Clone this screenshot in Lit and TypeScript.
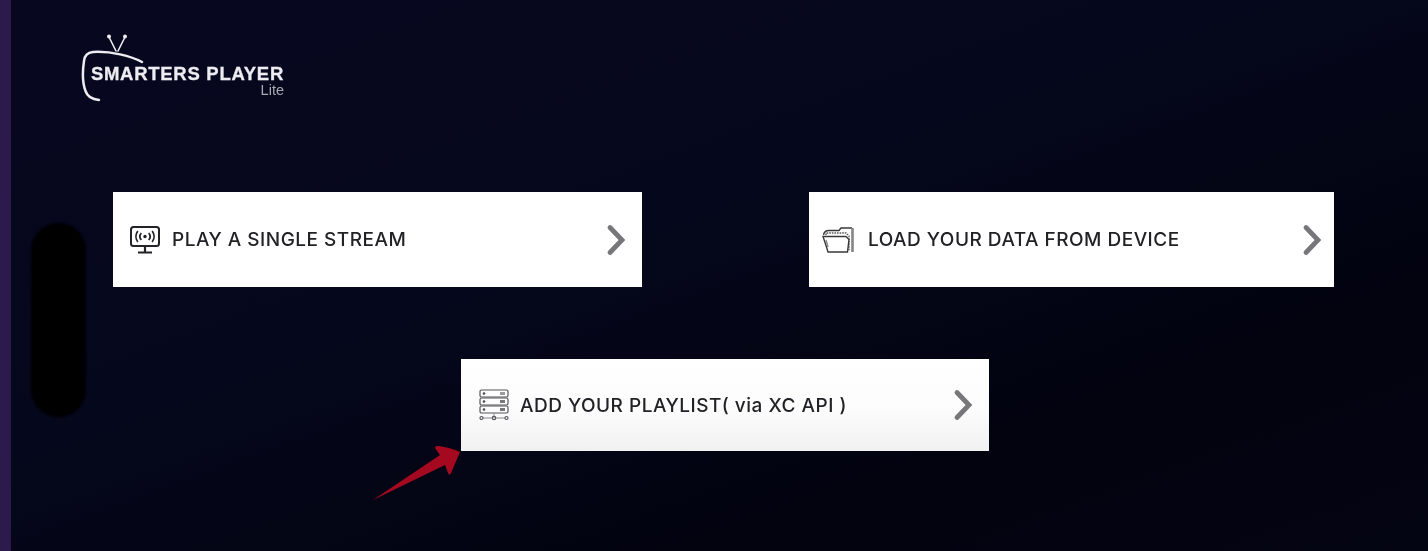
import { LitElement, css, html } from 'lit';
import { customElement, property } from 'lit/decorators.js';

const chevron = html`<svg class="chevron" viewBox="0 0 20 32" width="20" height="32">
  <path d="M4 3.500 L16 16 L4 28.500" fill="none" stroke="#77777a" stroke-width="4.800" stroke-linecap="round" stroke-linejoin="miter" />
</svg>`;

const streamIcon = html`<svg viewBox="0 0 30 28" width="30" height="28" fill="none" stroke="#232327" stroke-width="2">
  <rect x="1" y="1" width="28" height="19" rx="2.500" />
  <path d="M15 20v5.500M8 26.500h14" stroke-width="2.200" />
  <circle cx="15" cy="10.500" r="1.700" fill="#232327" stroke="none" />
  <path d="M11.300 7a5.500 5.500 0 0 0 0 7M18.700 7a5.500 5.500 0 0 1 0 7M7.800 5a9.500 9.500 0 0 0 0 11M22.200 5a9.500 9.500 0 0 1 0 11" stroke-width="1.700" />
</svg>`;

const folderIcon = html`<svg class="folder" viewBox="0 0 32 26" width="32" height="26" fill="none" stroke="#38383b" stroke-width="1.400">
  <path d="M1.500 8C2 5 4 3.500 7 3.500H17L19 1H30" />
  <path d="M4 8V6H24l3 3V24" stroke-dasharray="1.600 1" stroke="#555" />
  <path d="M30.500 1V25" stroke="#85858a" stroke-width="2.600" />
  <path d="M1 9.500H24l3 3-1.500 12.500H6L4.500 20z" fill="#fff" />
  <path d="M4 13l2 7" stroke="#85858a" />
</svg>`;

const serverIcon = html`<svg viewBox="0 0 32 34" width="32" height="34" fill="none" stroke="#55555b" stroke-width="1.200">
  <rect x="2" y="2" width="28" height="7" rx="1.500" />
  <rect x="2" y="10" width="28" height="7" rx="1.500" />
  <rect x="2" y="18" width="28" height="7" rx="1.500" />
  <g fill="#4a4a50" stroke="none">
    <circle cx="6" cy="5.500" r="1.300" /><circle cx="6" cy="13.500" r="1.300" /><circle cx="6" cy="21.500" r="1.300" />
    <rect x="22" y="4" width="5" height="3" opacity=".55" /><rect x="22" y="12" width="5" height="3" opacity=".75" /><rect x="22" y="20" width="5" height="3" opacity=".75" />
  </g>
  <path d="M16 25v5M5 30h9M18 30h9" stroke="#8a8a90" stroke-width="1" />
  <circle cx="3.500" cy="30" r="1.500" /><circle cx="16" cy="30" r="1.700" /><circle cx="28.500" cy="30" r="1.500" />
</svg>`;

@customElement('menu-card')
export class MenuCard extends LitElement {
  static styles = css`
    :host {
      display: block;
    }

    .card {
      display: flex;
      align-items: center;
      height: var(--card-height, 95px);
      padding: 0 var(--card-pad-right, 16px) 0 17px;
      box-sizing: border-box;
      background: var(--card-bg, #fff);
      color: #222226;
    }

    .icon {
      display: flex;
      width: 32px;
      margin-right: 10px;
    }

    .label {
      flex: 1;
      font-family: Inter, 'Noto Sans', sans-serif;
      font-size: 19px;
      font-weight: 500;
      letter-spacing: 0.5px;
      white-space: nowrap;
    }

    .icon,
    .label,
    .chevron {
      filter: blur(0.35px);
    }
  `;

  @property() label = '';

  render() {
    return html`<div class="card">
      <span class="icon"><slot></slot></span>
      <span class="label">${this.label}</span>
      ${chevron}
    </div>`;
  }
}

@customElement('app-root')
export class AppRoot extends LitElement {
  static styles = css`
    :host {
      display: block;
      width: 1428px;
      height: 551px;
      overflow: hidden;
    }

    .screen {
      position: relative;
      display: flex;
      height: 551px;
      background: #02020e;
    }

    .rail {
      width: 11px;
      background: #2d1a4c;
    }

    .main {
      flex: 1;
      display: flex;
      flex-direction: column;
      padding: 33px 94px 0 102px;
      background: linear-gradient(160deg, #070820 0%, #05071b 45%, #02030f 75%, #040512 100%);
    }

    .logo {
      display: grid;
      width: 206px;
      height: 70px;
      margin: 0 0 89px -32px;
      filter: blur(0.4px);
    }

    .logo > * {
      grid-area: 1 / 1;
    }

    .logo-text {
      display: flex;
      flex-direction: column;
      align-items: flex-end;
      padding-top: 31px;
      width: 203px;
      font-family: 'Liberation Sans', Arial, sans-serif;
      color: #ececf1;
    }

    .logo-name {
      font-size: 18.5px;
      font-weight: 700;
      line-height: 20px;
      letter-spacing: 0.72px;
      white-space: nowrap;
      -webkit-text-stroke: 0.3px #ececf1;
    }

    .logo-sub {
      font-size: 14.5px;
      line-height: 13px;
      color: #a8a8af;
    }

    .row {
      display: grid;
      grid-template-columns: 529px 525px;
      justify-content: space-between;
    }

    .row menu-card:last-child {
      --card-pad-right: 12px;
    }

    .folder {
      flex: none;
      margin-left: -4px;
    }

    .center {
      width: 528px;
      margin: 72px 0 0 348px;
      --card-height: 92px;
      --card-bg: linear-gradient(180deg, #fff 0%, #fcfcfc 55%, #f1f1f2 100%);
    }

    .pill {
      position: absolute;
      left: 31px;
      top: 223px;
      width: 55px;
      height: 194px;
      border-radius: 27px;
      background: #000;
      filter: blur(1px);
    }

    .arrow {
      position: absolute;
      left: 372px;
      top: 444px;
      filter: blur(0.5px);
    }
  `;

  render() {
    return html`<div class="screen">
      <div class="rail"></div>
      <div class="main">
        <div class="logo">
          <svg viewBox="0 0 206 70" width="206" height="70" fill="none" stroke="#ececf1" stroke-linecap="round">
            <path d="M61 29C50 23 30 18 12 19 6 19.500 3.500 23 3 28 1.500 38 1.500 50 4.500 58 6.500 64 12 66.500 18 67" stroke-width="2.500" />
            <path d="M28 4L35 18M44 4L37 18" stroke-width="1.600" />
            <circle cx="28" cy="3.500" r="2" fill="#ececf1" stroke="none" />
            <circle cx="44" cy="3.500" r="2" fill="#ececf1" stroke="none" />
          </svg>
          <div class="logo-text">
            <span class="logo-name">SMARTERS PLAYER</span>
            <span class="logo-sub">Lite</span>
          </div>
        </div>
        <div class="row">
          <menu-card label="PLAY A SINGLE STREAM">${streamIcon}</menu-card>
          <menu-card label="LOAD YOUR DATA FROM DEVICE">${folderIcon}</menu-card>
        </div>
        <div class="center">
          <menu-card label="ADD YOUR PLAYLIST( via XC API )">${serverIcon}</menu-card>
        </div>
      </div>
      <div class="pill"></div>
      <svg class="arrow" viewBox="0 0 90 58" width="90" height="58">
        <path d="M1 56L68 11 63 4C63 2 65 2 67 2 74 3 82 5 88 8L79 29C78 31 77 31 76 29L73 21Z" fill="#a5091f" />
      </svg>
    </div>`;
  }
}
